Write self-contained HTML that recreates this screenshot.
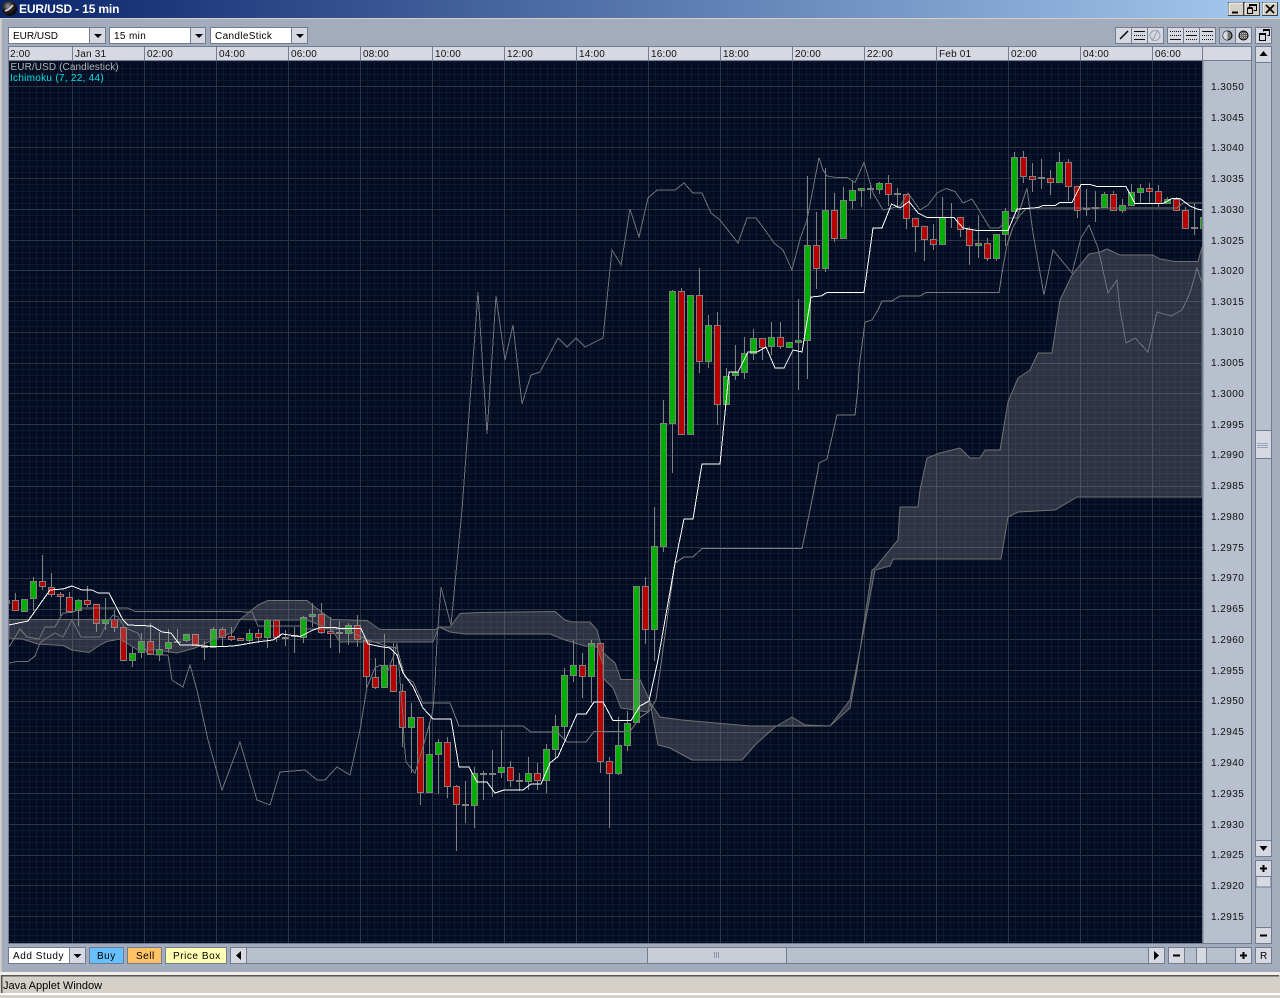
<!DOCTYPE html>
<html><head><meta charset="utf-8"><title>EUR/USD - 15 min</title>
<style>
html,body{margin:0;padding:0;background:#d4d0c8;width:1280px;height:998px;overflow:hidden}
svg{display:block;position:absolute;left:0;top:0}
text{font-family:"Liberation Sans",sans-serif;font-size:10px;fill:#000}
.b{fill:#d6d9e2;stroke:#717c90;stroke-width:1}
.w{fill:#fff;stroke:#717c90;stroke-width:1}
.t{fill:#b8bfcd;stroke:#717c90;stroke-width:1}
.l{font-size:10px;letter-spacing:.45px;fill:#111}
.h{font-size:10px;letter-spacing:.2px;fill:#111}
</style></head><body>
<svg width="1280" height="998" viewBox="0 0 1280 998" xmlns="http://www.w3.org/2000/svg">
<defs>
<linearGradient id="tg" x1="0" x2="1" y1="0" y2="0"><stop offset="0" stop-color="#0a246a"/><stop offset="1" stop-color="#a6caf0"/></linearGradient>
<radialGradient id="gl" cx=".4" cy=".35" r=".7"><stop offset="0" stop-color="#999"/><stop offset=".5" stop-color="#222"/><stop offset="1" stop-color="#000"/></radialGradient>
<clipPath id="c"><rect x="9" y="61" width="1193.5" height="882"/></clipPath>
<pattern id="gv" patternUnits="userSpaceOnUse" x="0" y="0" width="72" height="40"><path d="M7.5 0V40M14.5 0V40M22.5 0V40M29.5 0V40M36.5 0V40M43.5 0V40M50.5 0V40M58.5 0V40M65.5 0V40" stroke="#0e1a31" stroke-width="1"/></pattern>
<pattern id="gh" patternUnits="userSpaceOnUse" x="0" y="86" width="40" height="123"><path d="M0 6.5H40M0 12.5H40M0 18.5H40M0 25.5H40M0 37.5H40M0 43.5H40M0 49.5H40M0 55.5H40M0 68.5H40M0 74.5H40M0 80.5H40M0 86.5H40M0 98.5H40M0 105.5H40M0 111.5H40M0 117.5H40" stroke="#0e1a31" stroke-width="1"/></pattern>
<pattern id="gV" patternUnits="userSpaceOnUse" x="0" y="0" width="72" height="40"><path d="M0.5 0V40" stroke="#2a3447" stroke-width="1"/></pattern>
<pattern id="gH" patternUnits="userSpaceOnUse" x="0" y="86" width="40" height="123"><path d="M0 0.5H40M0 31.5H40M0 61.5H40M0 92.5H40" stroke="#2a3447" stroke-width="1"/></pattern>
</defs>

<!-- window -->
<rect width="1280" height="998" fill="#d4d0c8"/>
<rect x="0" y="18" width="1280" height="954" fill="#a3acbc"/>
<rect x="0" y="18" width="1280" height="1" fill="#d4d0c8"/>
<rect x="0" y="19" width="1" height="953" fill="#d4d0c8"/>
<rect x="1" y="19" width="1" height="953" fill="#c2c7d0"/>
<rect width="1280" height="18" fill="url(#tg)"/>
<circle cx="9.5" cy="8.5" r="7.5" fill="url(#gl)"/>
<path d="M5 11Q9 10 13 5" stroke="#ddd" stroke-width="1.6" fill="none"/>
<text x="19" y="13" style="font-size:12px;font-weight:bold;fill:#fff;letter-spacing:-.15px">EUR/USD - 15 min</text>
<g fill="#d4d0c8" stroke="#404040">
<rect x="1228.5" y="2.5" width="15" height="13"/><rect x="1244.5" y="2.5" width="15" height="13"/><rect x="1262.5" y="2.5" width="15" height="13"/>
</g>
<path d="M1229 3H1243M1229 3V15M1245 3H1259M1245 3V15M1263 3H1277M1263 3V15" stroke="#fff" fill="none"/>
<path d="M1232 12.5h6" stroke="#000" stroke-width="2"/>
<path d="M1249.5 7.5v-3h7v6h-3M1247.5 8.5h5v5h-5zM1247.5 7.5h5M1249.5 5.5h7" stroke="#000" fill="none"/>
<path d="M1266 5l8 8M1274 5l-8 8" stroke="#000" stroke-width="1.8"/>

<!-- top toolbar -->
<rect class="w" x="8.5" y="27.5" width="97" height="16"/><rect class="b" x="89.5" y="27.5" width="16" height="16"/>
<rect class="w" x="109.5" y="27.5" width="96" height="16"/><rect class="b" x="190.5" y="27.5" width="15" height="16"/>
<rect class="w" x="210.5" y="27.5" width="96" height="16"/><rect class="b" x="291.5" y="27.5" width="16" height="16"/>
<path d="M94 34h8l-4 4zM195 34h8l-4 4zM296 34h8l-4 4z" fill="#000"/>
<text x="13" y="39">EUR/USD</text>
<text x="114" y="39" style="letter-spacing:.35px">15 min</text>
<text x="215" y="39" style="letter-spacing:.35px">CandleStick</text>

<g>
<rect class="b" x="1115.5" y="27.5" width="16" height="16"/><rect class="b" x="1131.5" y="27.5" width="16" height="16"/><rect class="b" x="1147.5" y="27.5" width="16" height="16"/>
<rect class="b" x="1167.5" y="27.5" width="16" height="16"/><rect class="b" x="1183.5" y="27.5" width="16" height="16"/><rect class="b" x="1199.5" y="27.5" width="16" height="16"/>
<rect x="1219.5" y="27.5" width="16" height="16" fill="#b8bfcd" stroke="#717c90"/><rect class="b" x="1235.5" y="27.5" width="16" height="16"/>
<rect class="b" x="1255.5" y="27.5" width="16" height="16"/>
</g>
<path d="M1120 39l8-8" stroke="#000" stroke-width="1.4"/>
<path d="M1134 31.5h11M1134 39.5h11" stroke="#111"/><path d="M1134 35.5h11" stroke="#111" stroke-dasharray="1 1"/>
<path d="M1150 35.5a5 5 0 1 0 10 0a5 5 0 1 0 -10 0M1152 41l6-11" stroke="#9aa0ac" fill="none"/>
<path d="M1170 31.5h11M1170 35.5h11" stroke="#111" stroke-dasharray="1 1"/><path d="M1170 39.5h11" stroke="#111"/>
<path d="M1186 31.5h11M1186 39.5h11" stroke="#111" stroke-dasharray="1 1"/><path d="M1186 35.5h11" stroke="#111"/>
<path d="M1202 31.5h11" stroke="#111"/><path d="M1202 35.5h11M1202 39.5h11" stroke="#111" stroke-dasharray="1 1"/>
<circle cx="1227.5" cy="35.5" r="4.5" fill="#777" stroke="#000"/><path d="M1227.5 31a4.5 4.5 0 0 0 0 9z" fill="#d6d9e2"/>
<circle cx="1243.5" cy="35.5" r="4.5" fill="#666" stroke="#000"/>
<path d="M1240 33.5h7M1240 35.5h7M1240 37.5h7" stroke="#bbb" stroke-dasharray="1 1"/>
<path d="M1263.5 31.5v-2h6v6h-2M1259.5 33.5h6v7h-6zM1263.5 30.5h6M1259.5 34.5h6" stroke="#000" fill="none"/>

<!-- time header -->
<rect class="b" x="8.5" y="46.5" width="1243" height="14"/>
<path d="M72.5 46V60M144.5 46V60M216.5 46V60M288.5 46V60M360.5 46V60M432.5 46V60M504.5 46V60M576.5 46V60M648.5 46V60M720.5 46V60M792.5 46V60M864.5 46V60M936.5 46V60M1008.5 46V60M1080.5 46V60M1152.5 46V60M1202.5 46V60" stroke="#717c90"/>
<g class="h">
<text class="h" x="10" y="57">2:00</text><text class="h" x="75" y="57">Jan 31</text><text class="h" x="147" y="57">02:00</text><text class="h" x="219" y="57">04:00</text><text class="h" x="291" y="57">06:00</text><text class="h" x="363" y="57">08:00</text><text class="h" x="435" y="57">10:00</text><text class="h" x="507" y="57">12:00</text><text class="h" x="579" y="57">14:00</text><text class="h" x="651" y="57">16:00</text><text class="h" x="723" y="57">18:00</text><text class="h" x="795" y="57">20:00</text><text class="h" x="867" y="57">22:00</text><text class="h" x="939" y="57">Feb 01</text><text class="h" x="1011" y="57">02:00</text><text class="h" x="1083" y="57">04:00</text><text class="h" x="1155" y="57">06:00</text>
</g>

<!-- chart -->
<rect x="9" y="61" width="1194" height="882.5" fill="#040c22"/>
<g clip-path="url(#c)">
<rect x="9" y="61" width="1194" height="883" fill="url(#gv)"/>
<rect x="9" y="61" width="1194" height="883" fill="url(#gh)"/>
<rect x="9" y="61" width="1194" height="883" fill="url(#gV)"/>
<rect x="9" y="61" width="1194" height="883" fill="url(#gH)"/>

<!-- wicks -->
<path fill="none" stroke="#808080" d="M33.5 577V611M78.5 599V626M105.5 598V630M132.5 646V667M141.5 633V658M159.5 632V661M168.5 629V653M177.5 629V643M186.5 634V642M213.5 627V647M249.5 629V643M267.5 619V648M303.5 616V643M312.5 603V627M348.5 623V645M384.5 634V688M411.5 703V773M429.5 722V793M438.5 739V794M474.5 767V828M492.5 750V797M501.5 730V778M528.5 757V790M546.5 744V793M555.5 715V758M564.5 668V740M573.5 640V682M591.5 640V703M618.5 717V775M627.5 711V751M654.5 507V661M663.5 400V552M672.5 290V473M708.5 315V368M726.5 368V404M735.5 345V380M744.5 337V379M753.5 329V360M771.5 322V355M798.5 299V390M807.5 176V379M825.5 168V272M843.5 187V238M852.5 180V209M861.5 188V207M879.5 182V194M942.5 197V244M978.5 215V258M996.5 234V261M1005.5 208V246M1014.5 152V211M1059.5 152V182M1104.5 192V207M1122.5 199V213M1131.5 184V205M1140.5 184V204M1167.5 197V203
M15.5 593V611M42.5 555V590M51.5 573V597M60.5 592V616M69.5 592V613M87.5 586V607M96.5 604V632M114.5 610V632M150.5 623V655M204.5 641V660M222.5 627V647M231.5 627V641M258.5 629V643M276.5 620V642M321.5 603V634M330.5 617V648M357.5 615V647M366.5 640V688M375.5 658V689M393.5 643V691M402.5 684V747M420.5 717V805M447.5 737V798M456.5 785V851M510.5 761V787M537.5 763V790M582.5 653V698M600.5 642V773M609.5 757V828M645.5 577V644M681.5 288V434M699.5 268V373M717.5 312V425M762.5 338V360M780.5 322V349M816.5 212V289M834.5 193V242M888.5 175V206M906.5 194V229M915.5 218V252M924.5 226V261M933.5 224V250M960.5 217V237M969.5 227V265M987.5 238V261M1023.5 151V183M1032.5 163V192M1050.5 170V195M1068.5 159V201M1077.5 186V218M1113.5 191V210M1149.5 183V203M1158.5 185V207M1176.5 197V210M1185.5 207V228
M285.5 630V646M294.5 627V653M339.5 621V653M465.5 781V823M483.5 771V800M519.5 773V791M870.5 183V199M897.5 188V208M951.5 203V228M1041.5 159V189M1086.5 189V216M1095.5 191V222M1194.5 203V235M1203.5 200V230"/>
<!-- dojis -->
<path fill="none" stroke="#808080" stroke-width="2" d="M282 638h7M291 636h7M336 633h7M462 805h7M480 774h7M516 781h7M867 189h7M894 194h7M1038 178h7M1083 209h7M1092 208h7M1191 228h7"/>
<!-- green -->
<path fill="#00b000" stroke="#808080" d="M3.5 600.5h6V603.5h-6zM21.5 599.5h6V611.5h-6zM30.5 581.5h6V598.5h-6zM75.5 600.5h6V610.5h-6zM102.5 619.5h6V623.5h-6zM129.5 653.5h6V660.5h-6zM138.5 641.5h6V652.5h-6zM156.5 649.5h6V654.5h-6zM165.5 642.5h6V648.5h-6zM174.5 641.5h6V642.5h-6zM183.5 634.5h6V640.5h-6zM210.5 629.5h6V647.5h-6zM246.5 633.5h6V640.5h-6zM264.5 620.5h6V637.5h-6zM300.5 617.5h6V637.5h-6zM309.5 614.5h6V616.5h-6zM345.5 625.5h6V633.5h-6zM381.5 665.5h6V687.5h-6zM408.5 717.5h6V727.5h-6zM426.5 754.5h6V792.5h-6zM435.5 742.5h6V754.5h-6zM471.5 773.5h6V805.5h-6zM489.5 773.5h6V774.5h-6zM498.5 767.5h6V772.5h-6zM525.5 773.5h6V781.5h-6zM543.5 749.5h6V780.5h-6zM552.5 726.5h6V749.5h-6zM561.5 675.5h6V726.5h-6zM570.5 665.5h6V675.5h-6zM588.5 643.5h6V676.5h-6zM615.5 745.5h6V773.5h-6zM624.5 723.5h6V745.5h-6zM633.5 586.5h6V722.5h-6zM651.5 546.5h6V629.5h-6zM660.5 423.5h6V546.5h-6zM669.5 291.5h6V423.5h-6zM687.5 295.5h6V434.5h-6zM705.5 325.5h6V361.5h-6zM723.5 376.5h6V404.5h-6zM732.5 372.5h6V375.5h-6zM741.5 353.5h6V372.5h-6zM750.5 338.5h6V353.5h-6zM768.5 337.5h6V346.5h-6zM786.5 342.5h6V347.5h-6zM795.5 340.5h6V342.5h-6zM804.5 245.5h6V340.5h-6zM822.5 210.5h6V268.5h-6zM840.5 200.5h6V238.5h-6zM849.5 190.5h6V200.5h-6zM858.5 188.5h6V190.5h-6zM876.5 183.5h6V189.5h-6zM939.5 217.5h6V244.5h-6zM975.5 243.5h6V245.5h-6zM993.5 234.5h6V258.5h-6zM1002.5 211.5h6V234.5h-6zM1011.5 157.5h6V211.5h-6zM1056.5 162.5h6V182.5h-6zM1101.5 194.5h6V207.5h-6zM1119.5 205.5h6V210.5h-6zM1128.5 192.5h6V205.5h-6zM1137.5 188.5h6V192.5h-6zM1164.5 199.5h6V203.5h-6zM1200.5 217.5h6V228.5h-6z"/>
<!-- red -->
<path fill="#b80000" stroke="#808080" d="M12.5 600.5h6V610.5h-6zM39.5 581.5h6V586.5h-6zM48.5 587.5h6V594.5h-6zM57.5 594.5h6V596.5h-6zM66.5 597.5h6V611.5h-6zM84.5 600.5h6V604.5h-6zM93.5 604.5h6V623.5h-6zM111.5 619.5h6V627.5h-6zM120.5 627.5h6V660.5h-6zM147.5 641.5h6V654.5h-6zM192.5 634.5h6V645.5h-6zM201.5 645.5h6V647.5h-6zM219.5 629.5h6V637.5h-6zM228.5 636.5h6V639.5h-6zM237.5 638.5h6V640.5h-6zM255.5 633.5h6V637.5h-6zM273.5 620.5h6V637.5h-6zM318.5 614.5h6V632.5h-6zM327.5 631.5h6V633.5h-6zM354.5 625.5h6V639.5h-6zM363.5 640.5h6V676.5h-6zM372.5 677.5h6V687.5h-6zM390.5 665.5h6V691.5h-6zM399.5 691.5h6V727.5h-6zM417.5 717.5h6V792.5h-6zM444.5 742.5h6V786.5h-6zM453.5 786.5h6V804.5h-6zM507.5 767.5h6V780.5h-6zM534.5 773.5h6V780.5h-6zM579.5 665.5h6V676.5h-6zM597.5 643.5h6V761.5h-6zM606.5 761.5h6V773.5h-6zM642.5 586.5h6V629.5h-6zM678.5 291.5h6V434.5h-6zM696.5 295.5h6V361.5h-6zM714.5 325.5h6V404.5h-6zM759.5 338.5h6V347.5h-6zM777.5 337.5h6V346.5h-6zM813.5 245.5h6V268.5h-6zM831.5 210.5h6V238.5h-6zM885.5 183.5h6V194.5h-6zM903.5 194.5h6V218.5h-6zM912.5 218.5h6V226.5h-6zM921.5 226.5h6V239.5h-6zM930.5 239.5h6V244.5h-6zM957.5 217.5h6V229.5h-6zM966.5 229.5h6V245.5h-6zM984.5 243.5h6V258.5h-6zM1020.5 157.5h6V176.5h-6zM1029.5 176.5h6V179.5h-6zM1047.5 178.5h6V182.5h-6zM1065.5 162.5h6V186.5h-6zM1074.5 186.5h6V210.5h-6zM1110.5 194.5h6V210.5h-6zM1146.5 188.5h6V191.5h-6zM1155.5 191.5h6V203.5h-6zM1173.5 199.5h6V210.5h-6zM1182.5 210.5h6V228.5h-6z"/>

<!-- cloud -->
<g fill="#a0a0a0" fill-opacity=".27" stroke="#707070" stroke-width="1" stroke-linejoin="round">
<path d="M9 619.5H240L258 605L268 600.5H307L315 607L332 619.5H335L367 620.5L380 629.5H435L439 627H450L460 613.5L480 612.5L555 611.5L565 620L572 622L590 622L597 630L603 652.5L615 663L621 679.5H640L650 701L648 712L621 708L613 688L603 678V665L597 647L585 646L565 640L550 634L465 634L450 632L439 627L433 642L340 642L332 630L307 620H270L240 619.5L233 632L213 640L195 648L177 653L157 650L138 650L120 639L107 641.5L100 645L89 652.5L72 650L63 645.5L38 644L22 639L9 638Z"/>
<path d="M650 702L660 717L682 720L750 726L830 726L805 725L792 717L775 727L755 745L742 760H692L670 748L658 745Z"/>
<path d="M830 726L850 708L857 670L872 570L875 568L898 540L900 507H918L920 490L927 458L940 453L960 448L970 458H980L985 450H1000L1008 402L1018 378L1030 370L1038 353H1052L1060 300L1072 275L1089 254L1100 252L1107 249L1120 255H1153L1160 259L1175 261.5H1198L1202 247V497H1077L1055 510L1018 512L1008 517L1001 559H893L890 566L875 570L860 650L850 700L830 726Z"/>
</g>

<!-- kijun -->
<path fill="none" stroke="#787878" shape-rendering="crispEdges" d="M9 647L20 629L27 637L39 639L45 627H55L63 613L72 612.5L82 608H128L135 611.5H240L245 612H252L258 626H300L305 629H345L368 640L390 647L397 648L405 677L413 682L423 703H450L459 726H523L531 732H557L567 742H586L594 731.5H630L640 717.5L649 711.5L656 700L675 563L684 557H693L702 548.5H802L810 510L818 470L819 463L827 459L837 415H855L858 388L859 368L865 322L872 320L878 310L882 301H892L900 296H920L926 292.5H999L1003 267L1007 245L1013 227L1020 215L1027 208H1177L1183 203H1202"/>
<!-- chikou -->
<path fill="none" stroke="#6e7278" shape-rendering="crispEdges" d="M9 663L17 661.5H28L35 656L40 643L45 639L55 633L63 637L72 620L81 637H100L107 623L113 615L118 617L125 628L138 633L147 653L156 655L168 655L172 680L183 687L190 665L197 690L208 740L222 790L240 742L257 800L270 805L280 772L305 770L317 780H325L337 767L350 775L360 730L367 687L375 668L380 665L387 673L395 652L397 643L403 717L404 740L406 762L415 773L423 747L430 722L433 710L435 683L437 640L441 587L451 625L462 510L478 292L487 434L496 296L505 360L513 325L522 404L531 375L540 372L558 338L567 347L576 338L585 347L603 338L612 250L621 265L630 209L639 237L648 198L657 190H675L684 183L693 193H702L711 213L720 220L738 243L747 218H756L765 230L774 243L783 250L792 270L800 239L807 220L819 157.5L823 170L827 176L836 177.5H847L855 182.5L864 162.5L873 193L883 210L892 208L900 206L908 193L920 210L928 205L937 193L946 188.5L955 191.5L963 203L972 199L990 228H999L1009 218L1017 218L1027 188L1033 233L1044 295L1053 250L1072 273L1081 238L1089 225L1098 248L1108 293L1117 280L1120 310L1126 343L1135 338L1148 352L1157 312L1171 316L1182 310L1190 293L1197 268L1202 283"/>
<!-- tenkan -->
<path fill="none" stroke="#fff" stroke-width="1" shape-rendering="crispEdges" d="M9 625L28 621L50 590L63 589L72 586L82 590H92L98 593H109L123 620L128 625L152 626L162 632L171 633L180 645H197L205 646.5H223L233 646L240 645L257 642L273 640L282 634L300 636.5L312 630.5L320 627.5H335L340 628.5H361L368 644L380 646.5L390 648L397 655L403 673L413 686.5L423 708L433 719H451L459 767H469L477 782H487L495 793L504 790H523L531 784H541L550 763L558 756.5L577 714H586L594 702H603L613 720.5H631L640 706L649 701L658 660L675 563L684 519H693L702 464H720L729 372H738L748 352H757L766 347L775 368H784L793 350L802 352L811 297L821 296L827 292.5H864L873 228H882L891.5 204L900 208L909 201.5L918 213L927 217.5H954L963 228L977 230.5H1008L1017 209L1027 208.5L1038 207.5L1043 205.5H1055L1060 202.5H1072L1081 184.5H1090L1097 186.5H1126L1135 203.5H1163L1172 198.5H1180L1190 206L1197 209L1202 210"/>
</g>
<text x="10.5" y="70" style="fill:#b4b4b4;letter-spacing:.1px">EUR/USD (Candlestick)</text>
<text x="10" y="81" style="fill:#00e4e4;letter-spacing:.28px">Ichimoku (7, 22, 44)</text>

<!-- price axis -->
<rect class="t" x="1203" y="60.5" width="48.5" height="883"/>
<rect x="8.5" y="60.5" width="1194" height="883" fill="none" stroke="#717c90"/>
<g>
<text class="l" x="1211" y="90">1.3050</text><text class="l" x="1211" y="121">1.3045</text><text class="l" x="1211" y="151">1.3040</text><text class="l" x="1211" y="182">1.3035</text><text class="l" x="1211" y="213">1.3030</text><text class="l" x="1211" y="244">1.3025</text><text class="l" x="1211" y="274">1.3020</text><text class="l" x="1211" y="305">1.3015</text><text class="l" x="1211" y="335">1.3010</text><text class="l" x="1211" y="366">1.3005</text><text class="l" x="1211" y="397">1.3000</text><text class="l" x="1211" y="428">1.2995</text><text class="l" x="1211" y="458">1.2990</text><text class="l" x="1211" y="489">1.2985</text><text class="l" x="1211" y="520">1.2980</text><text class="l" x="1211" y="551">1.2975</text><text class="l" x="1211" y="581">1.2970</text><text class="l" x="1211" y="612">1.2965</text><text class="l" x="1211" y="643">1.2960</text><text class="l" x="1211" y="674">1.2955</text><text class="l" x="1211" y="704">1.2950</text><text class="l" x="1211" y="735">1.2945</text><text class="l" x="1211" y="766">1.2940</text><text class="l" x="1211" y="797">1.2935</text><text class="l" x="1211" y="828">1.2930</text><text class="l" x="1211" y="858">1.2925</text><text class="l" x="1211" y="889">1.2920</text><text class="l" x="1211" y="920">1.2915</text>
</g>

<!-- right scroll -->
<rect class="t" x="1255.5" y="46.5" width="16" height="810"/>
<rect class="b" x="1255.5" y="46.5" width="16" height="16"/>
<rect class="b" x="1255.5" y="840.5" width="16" height="16"/>
<rect class="b" x="1255.5" y="430.5" width="16" height="28"/>
<path d="M1257 443.5h11M1257 445.5h11M1257 447.5h11" stroke="#9aa3b4"/>
<path d="M1263.5 51l-4 5h8zM1259.5 846h8l-4 5z" fill="#000"/>
<rect class="t" x="1255.5" y="860.5" width="16" height="83"/>
<rect class="b" x="1255.5" y="860.5" width="16" height="16"/>
<rect x="1256" y="876.5" width="15" height="10.5" fill="#d6d9e2" stroke="#717c90"/>
<rect class="b" x="1255.5" y="927.5" width="16" height="16"/>
<path d="M1260 868.5h7M1263.5 865v7M1260 935.5h7" stroke="#000" stroke-width="2"/>

<!-- bottom bar -->
<rect class="w" x="8.5" y="947.5" width="77" height="16"/><rect class="b" x="69.5" y="947.5" width="16" height="16"/>
<path d="M73.5 954h8l-4 4z" fill="#000"/>
<text x="13" y="959" style="letter-spacing:.55px">Add Study</text>
<rect x="89.5" y="947.5" width="34" height="16" fill="#66bfff" stroke="#717c90"/>
<text x="97" y="959" style="letter-spacing:.5px">Buy</text>
<rect x="127.5" y="947.5" width="34" height="16" fill="#ffc266" stroke="#717c90"/>
<text x="136" y="959" style="letter-spacing:.5px">Sell</text>
<rect x="165.5" y="947.5" width="61" height="16" fill="#ffffb3" stroke="#717c90"/>
<text x="173" y="959" style="letter-spacing:.55px">Price Box</text>
<rect class="t" x="246.5" y="947.5" width="902" height="16"/>
<rect class="b" x="230.5" y="947.5" width="16" height="16"/>
<rect class="b" x="1148.5" y="947.5" width="16" height="16"/>
<rect x="647.5" y="947.5" width="139" height="16" fill="#c9cdd8" stroke="#717c90"/>
<path d="M714.5 952v6M716.5 952v6M718.5 952v6" stroke="#8a93a4"/>
<path d="M236 955.5l5-4.5v9zM1159 955.5l-5-4.5v9z" fill="#000"/>
<rect class="t" x="1168.5" y="947.5" width="83" height="16"/>
<rect class="b" x="1168.5" y="947.5" width="16" height="16"/>
<rect class="b" x="1235.5" y="947.5" width="16" height="16"/>
<rect x="1196.5" y="947.5" width="10" height="16" fill="#d6d9e2" stroke="#717c90"/>
<path d="M1173 955.5h7M1240 955.5h7M1243.5 952v7" stroke="#000" stroke-width="2"/>
<rect class="b" x="1255.5" y="947.5" width="16" height="16"/>
<text x="1260" y="959">R</text>

<!-- status bar -->
<rect x="0" y="972" width="1280" height="26" fill="#d4d0c8"/>
<rect x="0" y="972" width="1280" height="3" fill="#f2f0ea"/>
<rect x="1" y="975" width="1278" height="1.5" fill="#555"/>
<rect x="1" y="975" width="1.5" height="18" fill="#555"/>
<rect x="0" y="993" width="1280" height="2" fill="#fff"/>
<text x="3" y="989" style="font-size:11px">Java Applet Window</text>
</svg>
</body></html>
